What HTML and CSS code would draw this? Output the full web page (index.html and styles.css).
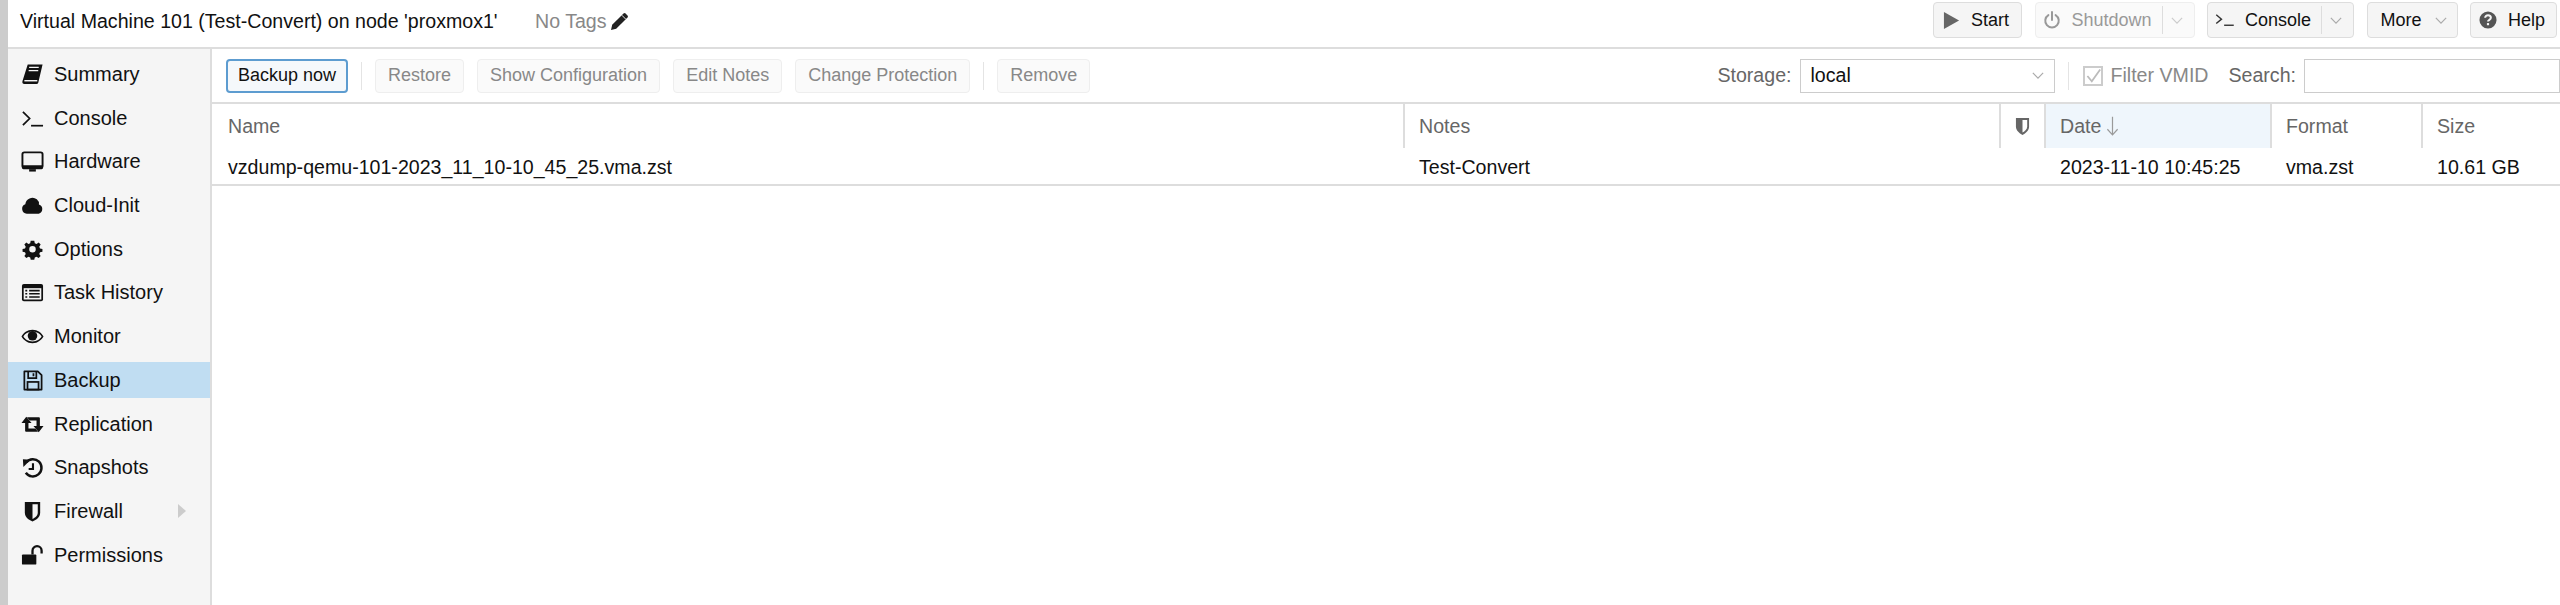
FILE: index.html
```html
<!DOCTYPE html>
<html lang="en">
<head>
<meta charset="utf-8">
<title>Virtual Machine 101</title>
<link rel="stylesheet" href="styles.css">
</head>
<body>
<div class="app">
  <header class="topbar">
    <span class="title">Virtual Machine 101 (Test-Convert) on node 'proxmox1'</span>
    <span class="tags">No Tags</span>
    <svg class="pencil" viewBox="0 0 20 20"><path d="M1 19l1.200-5.200L13.500 2.500a1.500 1.500 0 0 1 2.100 0l1.900 1.900a1.500 1.500 0 0 1 0 2.100L6.200 17.800z" fill="#222"/><path d="M11.800 4.200l4 4" stroke="#fff" stroke-width=".9"/></svg>
    <div class="top-actions">
      <button class="tbtn start"><svg class="ti" viewBox="0 0 18 18"><path d="M1 0l16 9-16 9z" fill="#666"/></svg>Start</button>
      <button class="tbtn split shutdown off"><svg class="ti" viewBox="0 0 20 20"><path d="M6 4.500a7.500 7.500 0 1 0 8 0M10 1v9" fill="none" stroke="#999" stroke-width="2.200" stroke-linecap="round"/></svg>Shutdown<span class="divider"></span><svg class="chev" viewBox="0 0 14 8"><path d="M1 1l6 6 6-6" fill="none" stroke="#ccc" stroke-width="1.400"/></svg></button>
      <button class="tbtn split console"><svg class="ti wide" viewBox="0 0 22 16"><path d="M1 2l6 5-6 5" fill="none" stroke="#333" stroke-width="1.600"/><path d="M10 14h11" stroke="#333" stroke-width="1.600"/></svg>Console<span class="divider"></span><svg class="chev" viewBox="0 0 14 8"><path d="M1 1l6 6 6-6" fill="none" stroke="#aaa" stroke-width="1.400"/></svg></button>
      <button class="tbtn more">More<svg class="chev" viewBox="0 0 14 8"><path d="M1 1l6 6 6-6" fill="none" stroke="#aaa" stroke-width="1.400"/></svg></button>
      <button class="tbtn help"><svg class="ti" viewBox="0 0 20 20"><circle cx="10" cy="10" r="9.500" fill="#555"/><path d="M6.800 7.600a3.200 3 0 0 1 6.400 0c0 2.200-3.200 2.200-3.200 4.200" fill="none" stroke="#f5f5f5" stroke-width="2.200"/><rect x="8.800" y="13.400" width="2.400" height="2.400" fill="#f5f5f5"/></svg>Help</button>
    </div>
  </header>
  <div class="main">
    <nav class="side">
      <a class="item"><svg class="ic" viewBox="0 0 24 24"><path d="M7 1.500h15.500l-4.500 19a2 2 0 0 1-2 1.500H3.500a2.500 2.500 0 0 1-2-3z" fill="#111"/><path d="M8.500 4.500h10M8 8h10" stroke="#f5f5f5" stroke-width="1.200"/><path d="M3.500 18.500h13.500" stroke="#f5f5f5" stroke-width="1.500"/></svg>Summary</a>
      <a class="item"><svg class="ic" viewBox="0 0 24 24"><path d="M2 5l7 7-7 7" fill="none" stroke="#111" stroke-width="1.800"/><path d="M10.500 19.500H23" stroke="#111" stroke-width="1.800"/></svg>Console</a>
      <a class="item"><svg class="ic" viewBox="0 0 24 24"><rect x="1.500" y="2.500" width="21" height="16" rx="2" fill="none" stroke="#111" stroke-width="2"/><path d="M1 16h22v2.500a1.500 1.500 0 0 1-1.500 1.500h-19A1.500 1.500 0 0 1 1 18.500z" fill="#111"/><path d="M8.500 20h7v2.500h-7z" fill="#111"/></svg>Hardware</a>
      <a class="item"><svg class="ic" viewBox="0 0 24 24"><path d="M6 20.500a5 5 0 0 1-1.500-9.700 7.500 7.500 0 0 1 12-5.300 6 6 0 0 1 2.200 5.400A5 5 0 0 1 18.500 20.500z" fill="#111"/></svg>Cloud-Init</a>
      <a class="item"><svg class="ic" viewBox="0 0 24 24"><path fill-rule="evenodd" d="M9.800 2h4.400l.6 3 2.200.9 2.600-1.700 2.400 2.400-1.700 2.600.9 2.200 3 .6v3.400l-3 .6-.9 2.200 1.700 2.600-2.400 2.400-2.600-1.700-2.200.9-.6 3H9.800l-.6-3-2.200-.9-2.600 1.700-2.400-2.400 1.700-2.600-.9-2.200-3-.6v-3.400l3-.6.9-2.200-1.700-2.600 2.400-2.400 2.600 1.700 2.200-.9zM12 8.500a4 4 0 1 0 0 8 4 4 0 0 0 0-8z" fill="#111" transform="translate(1.800 1.200) scale(.85)"/></svg>Options</a>
      <a class="item"><svg class="ic" viewBox="0 0 24 24"><rect x="1" y="3" width="22" height="18" rx="2" fill="#111"/><rect x="2.800" y="7.500" width="18.400" height="11.800" fill="#f5f5f5"/><path d="M4.500 10h2M4.500 13.300h2M4.500 16.700h2M8.500 10h11M8.500 13.300h11M8.500 16.700h11" stroke="#111" stroke-width="1.800"/></svg>Task History</a>
      <a class="item"><svg class="ic" viewBox="0 0 24 24"><path fill-rule="evenodd" d="M12 5C6.500 5 2.500 8.500.5 12c2 3.500 6 7 11.500 7s9.500-3.500 11.500-7C21.500 8.500 17.500 5 12 5zm0 1.800c4.500 0 8 2.500 9.500 5.200-1.500 2.700-5 5.200-9.500 5.200S4 14.700 2.500 12C4 9.300 7.500 6.800 12 6.800z" fill="#111"/><circle cx="12" cy="11.300" r="5" fill="#111"/></svg>Monitor</a>
      <a class="item active"><svg class="ic" viewBox="0 0 24 24"><path d="M3.500 2.500h14l4 4V21.500h-18z" fill="none" stroke="#111" stroke-width="1.800" stroke-linejoin="round"/><path d="M7.500 2.500v7h8.500v-7M13 4.500v3" fill="none" stroke="#111" stroke-width="1.800"/><rect x="6.800" y="13.500" width="11.500" height="8" fill="none" stroke="#111" stroke-width="1.800"/></svg>Backup</a>
      <a class="item"><svg class="ic" viewBox="0 0 24 24"><path d="M5.500 4L11 10.500H7.800v5.800H15l2.800 3.200H5.300a1 1 0 0 1-1-1V10.500H.5z" fill="#111"/><path d="M18.500 20L13 13.500h3.200V7.700H9L6.200 4.500h12.500a1 1 0 0 1 1 1v8h3.800z" fill="#111"/></svg>Replication</a>
      <a class="item"><svg class="ic" viewBox="0 0 24 24"><path d="M5.500 6.500A9 9 0 1 1 5 17.500" fill="none" stroke="#111" stroke-width="2.600"/><path d="M2 3.500l8 .5-7.500 7.500z" fill="#111"/><path d="M12.500 7.500v6h-4.500" fill="none" stroke="#111" stroke-width="2.200"/></svg>Snapshots</a>
      <a class="item has-arrow"><svg class="ic" viewBox="0 0 24 24"><path d="M4 2h16v11c0 5-4 7.500-8 9.500-4-2-8-4.500-8-9.500z" fill="#111"/><path d="M12 4.500h5.500V13c0 3.500-2.800 5.300-5.500 6.800z" fill="#f5f5f5"/></svg>Firewall<span class="arrow"></span></a>
      <a class="item"><svg class="ic" viewBox="0 0 24 24"><rect x="1" y="11" width="15" height="10.500" rx="1" fill="#111"/><path d="M12 11V7a4.700 4.700 0 0 1 9.500 0v3" fill="none" stroke="#111" stroke-width="2.400"/></svg>Permissions</a>
    </nav>
    <section class="content">
      <div class="toolbar">
        <button class="btn primary">Backup now</button>
        <span class="sep"></span>
        <button class="btn off">Restore</button>
        <button class="btn off">Show Configuration</button>
        <button class="btn off">Edit Notes</button>
        <button class="btn off">Change Protection</button>
        <span class="sep"></span>
        <button class="btn off">Remove</button>
        <div class="tool-right">
          <label class="lbl">Storage:</label>
          <div class="combo"><span>local</span><svg class="chev" viewBox="0 0 14 8"><path d="M1 1l6 6 6-6" fill="none" stroke="#aaa" stroke-width="1.400"/></svg></div>
          <span class="sep wide"></span>
          <span class="check"><svg viewBox="0 0 20 20"><path d="M3 10l5.500 6.500L19 2" fill="none" stroke="#bbb" stroke-width="2.200"/></svg></span>
          <span class="lbl filter">Filter VMID</span>
          <label class="lbl search">Search:</label>
          <div class="input"></div>
        </div>
      </div>
      <div class="grid head">
        <div class="hc">Name</div>
        <div class="hc">Notes</div>
        <div class="hc shield"><svg class="sh" viewBox="0 0 16 20"><path d="M1 1h14v9c0 4.500-3.500 7-7 9-3.500-2-7-4.500-7-9z" fill="#666"/><path d="M8 3h5v7c0 3-2.500 5-5 6.500z" fill="#fff"/></svg></div>
        <div class="hc sorted">Date<svg class="down" viewBox="0 0 14 22"><path d="M7 1v19M1.500 14.500L7 20.500l5.500-6" fill="none" stroke="#9a9a9a" stroke-width="1.300"/></svg></div>
        <div class="hc">Format</div>
        <div class="hc">Size</div>
      </div>
      <div class="grid row">
        <div class="td">vzdump-qemu-101-2023_11_10-10_45_25.vma.zst</div>
        <div class="td">Test-Convert</div>
        <div class="td"></div>
        <div class="td">2023-11-10 10:45:25</div>
        <div class="td">vma.zst</div>
        <div class="td">10.61 GB</div>
      </div>
    </section>
  </div>
</div>
</body>
</html>
```
FILE: styles.css
```css
* { box-sizing: border-box; }
html, body { margin: 0; height: 100%; }
body {
  background: #ccc;
  font-family: "Liberation Sans", Arial, sans-serif;
  font-size: 19.6px;
  color: #111;
  overflow: hidden;
}
.app {
  margin-left: 8px;
  height: 605px;
  background: #fff;
  display: flex;
  flex-direction: column;
}
.topbar {
  height: 49px;
  flex: none;
  display: flex;
  align-items: flex-start;
  border-bottom: 2px solid #ddd;
  padding: 9px 3px 0 12px;
  line-height: 24px;
}
.title { width: 515px; }
.tags { color: #888; }
.pencil { width: 20px; height: 20px; margin: 2px 0 0 3px; }
.top-actions {
  margin-left: auto;
  margin-top: -7px;
  display: flex;
  gap: 12.5px;
}
button { font-family: inherit; font-size: 18px; }
.tbtn {
  height: 36px;
  padding: 0;
  display: flex;
  align-items: center;
  background: #f5f5f5;
  border: 1px solid #ddd;
  border-radius: 4px;
  color: #111;
}
.tbtn.off { background: #fafafa; color: #999; border-color: #eee; }
.start { width: 89px; padding-left: 9px; gap: 11px; }
.shutdown { width: 160px; padding-left: 7px; }
.console { width: 147px; padding-left: 7px; }
.more { width: 91px; padding-left: 13px; gap: 13px; }
.help { width: 87px; padding-left: 8px; gap: 11px; }
.ti { width: 18px; height: 20px; flex: none; margin-right: 11px; }
.start .ti { width: 17px; height: 17px; margin-right: 0; }
.help .ti { margin-right: 0; }
.ti.wide { width: 20px; height: 14px; margin-right: 10px; }
.divider { width: 1px; height: 28px; background: #ddd; margin: 0 8px 0 10px; }
.chev { width: 12px; height: 7px; flex: none; }
.main { flex: 1; display: flex; min-height: 0; }
.side {
  width: 204px;
  flex: none;
  background: #f5f5f5;
  border-right: 2px solid #ddd;
  padding-top: 7px;
  display: flex;
  flex-direction: column;
  gap: 7.7px;
  font-size: 20px;
}
.item {
  height: 36px;
  flex: none;
  display: flex;
  align-items: center;
  padding: 1px 0 0 13px;
  color: #111;
}
.item.active { background: #c0ddf2; }
.ic { width: 23px; height: 23px; margin-right: 10px; flex: none; }
.has-arrow { position: relative; }
.arrow {
  position: absolute;
  left: 170px;
  top: 11px;
  border-left: 8px solid #ccc;
  border-top: 7px solid transparent;
  border-bottom: 7px solid transparent;
}
.content { flex: 1; min-width: 0; display: flex; flex-direction: column; }
.toolbar {
  height: 55px;
  flex: none;
  display: flex;
  align-items: center;
  padding-left: 14px;
  gap: 13px;
  border-bottom: 2px solid #ddd;
}
.btn {
  height: 34px;
  padding: 0 12px;
  background: #f5f5f5;
  border: 1px solid #ddd;
  border-radius: 4px;
  color: #111;
  white-space: nowrap;
}
.btn.primary { width: 122px; padding: 0; border: 2px solid #5d9cd0; background: #f5f8fb; }
.btn.off { background: #fafafa; border-color: #eee; color: #888; }
.sep { width: 1px; height: 28px; background: #e4e4e4; flex: none; }
.tool-right {
  margin-left: auto;
  display: flex;
  align-items: center;
}
.lbl { color: #666; white-space: nowrap; }
.combo {
  width: 255px;
  height: 34px;
  margin-left: 8px;
  border: 1px solid #ccc;
  display: flex;
  align-items: center;
  justify-content: space-between;
  padding: 0 10px;
}
.sep.wide { margin: 0 14px 0 13px; }
.check {
  width: 20px;
  height: 20px;
  border: 2px solid #ccc;
  flex: none;
}
.check svg { display: block; width: 16px; height: 16px; overflow: visible; }
.filter { margin-left: 8px; color: #888; }
.search { margin-left: 20px; }
.input { width: 256px; height: 34px; margin-left: 8px; border: 1px solid #ccc; }
.grid {
  display: grid;
  grid-template-columns: 1191px 596px 45px 226px 151px 139px;
  flex: none;
}
.head { height: 44px; }
.hc {
  padding: 0 16px 0 14px;
  display: flex;
  align-items: center;
  color: #666;
  border-left: 2px solid #ddd;
}
.hc:first-child { border-left: 0; padding-left: 16px; }
.hc.shield { padding: 0 0 0 14px; }
.sh { width: 15px; height: 19px; }
.hc.sorted { background: #eff6fc; }
.down { width: 13px; height: 22px; margin-left: 5px; }
.row { height: 38px; border-bottom: 2px solid #ddd; }
.td { padding: 0 16px; line-height: 38px; white-space: nowrap; }
```
